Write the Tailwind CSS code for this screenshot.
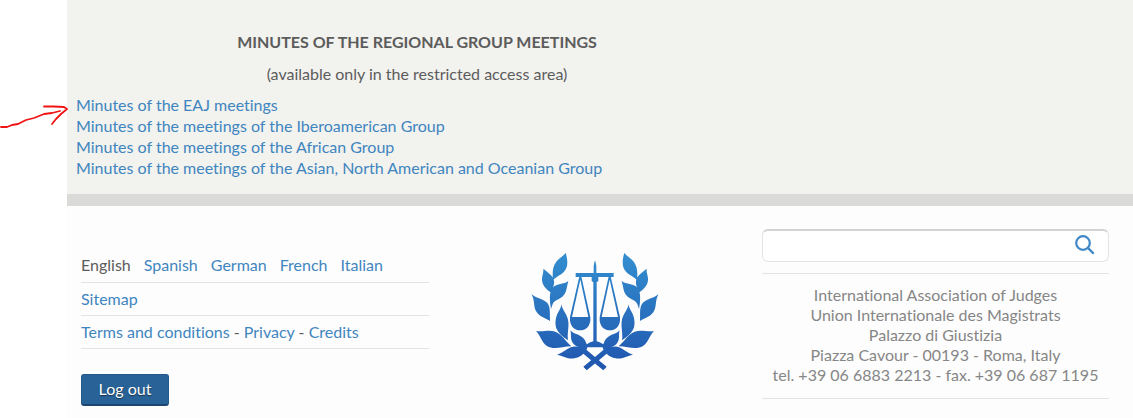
<!DOCTYPE html>
<html lang="en">

<head>
  <meta charset="UTF-8" />
  <meta name="viewport" content="width=device-width, initial-scale=1.0" />
  <title>Minutes of the regional group meetings</title>
  <script src="https://cdn.jsdelivr.net/npm/@tailwindcss/browser@4"></script>
</head>

<body class="relative bg-white pl-[67px] font-['Lato',sans-serif] text-base leading-[21px] text-[#5c5c5c] [font-variant-ligatures:none]">

  <main class="border-b-12 border-[#dadad8] bg-[#f2f2ee] px-[9px] pt-[31px] pb-4">
    <div class="max-w-[682px]">
      <h1 class="text-center font-bold">MINUTES OF THE REGIONAL GROUP MEETINGS</h1>
      <p class="mt-[11px] text-center">(available only in the restricted access area)</p>
      <ul class="mt-[10px] text-[#3f85c0]">
        <li><a href="#" class="hover:underline">Minutes of the EAJ meetings</a></li>
        <li><a href="#" class="hover:underline">Minutes of the meetings of the Iberoamerican Group</a></li>
        <li><a href="#" class="hover:underline">Minutes of the meetings of the African Group</a></li>
        <li><a href="#" class="hover:underline">Minutes of the meetings of the Asian, North American and Oceanian Group</a></li>
      </ul>
    </div>
  </main>

  <!-- pointer to the first link -->
  <svg class="absolute top-[100px] left-0" width="70" height="32" viewBox="0 0 70 32" fill="none" stroke="#f01414" stroke-width="1.8" stroke-linecap="round" stroke-linejoin="round" aria-hidden="true">
    <path d="M1 27 L7 27 L12 25 L18 24 L26 20 L34 18 L44 14 L52 13 L60 11" />
    <path d="M44 6.500 L54 6.500 L64 7 L67 9 L61 14 L56 19 L52 24" />
  </svg>

  <footer class="grid grid-cols-[348px_1fr_347px] bg-[#fdfdfd] pt-[23px] pr-6 pb-4 pl-[14px]">
    <div class="pt-[21px]">
      <nav class="flex gap-[13px] border-b border-[#e3e3e3] pt-1 pb-[7px] text-[#3f85c0]">
        <span class="text-[#5c5c5c]">English</span>
        <a href="#">Spanish</a>
        <a href="#">German</a>
        <a href="#">French</a>
        <a href="#">Italian</a>
      </nav>
      <p class="border-b border-[#e3e3e3] pt-[5px] pb-[6px] text-[#3f85c0]"><a href="#">Sitemap</a></p>
      <p class="border-b border-[#e3e3e3] pt-[5px] pb-[6px]">
        <a href="#" class="text-[#3f85c0]">Terms and conditions</a> -
        <a href="#" class="text-[#3f85c0]">Privacy</a> -
        <a href="#" class="text-[#3f85c0]">Credits</a>
      </p>
      <button type="button" class="mt-[25px] h-8 w-22 rounded-[3px] border border-b-2 border-[#255a8c] border-b-[#1c4670] bg-[#286296] pb-px leading-5 text-white text-shadow-[0_1px_1px_rgba(0,0,0,0.5)]">Log out</button>
    </div>

    <div class="flex items-start justify-center pt-[11px]">
      <svg width="155" height="140" viewBox="0 0 465 420" role="img" aria-label="International Association of Judges">
        <defs>
          <linearGradient id="blue" gradientUnits="userSpaceOnUse" x1="0" y1="38" x2="0" y2="390">
            <stop offset="0" stop-color="#338fd0" />
            <stop offset="1" stop-color="#2055ae" />
          </linearGradient>
          <clipPath id="emblem">
            <!-- left laurel -->
            <path d="M143 38 C151 66 149 82 139 94 C131 105 116 108 105 121 C103 98 103 80 116 64 C124 53 137 49 143 38Z" />
            <path d="M76 86 C91 99 105 106 108 123 C110 138 101 145 101 159 C85 148 74 139 72 121 C71 107 77 101 76 86Z" />
            <path d="M151 123 C145 143 147 158 133 170 C121 180 108 179 103 195 L99 207 C96 193 95 178 96 165 C98 148 105 138 119 134 C132 130 141 131 151 123Z" />
            <path d="M40 161 C52 175 75 174 88 189 C98 201 95 218 96 243 C80 233 62 229 54 213 C46 198 51 181 40 161Z" />
            <path d="M130 193 C133 212 149 223 151 245 C153 265 147 281 150 301 C136 292 119 279 114 262 C110 245 114 228 121 216 C126 207 129 203 130 193Z" />
            <path d="M54 273 C76 276 93 268 112 275 C133 283 142 303 160 319 C133 319 108 331 87 318 C70 307 68 286 54 273Z" />
            <path d="M157 271 C164 281 180 282 192 291 C203 299 205 312 210 322 C194 326 172 321 164 308 C156 296 161 286 157 271Z" />
            <path d="M117 344 C138 338 146 323 165 320 C181 318 193 326 208 323 C202 339 187 352 169 355 C149 358 134 347 117 344Z" />
            <!-- right laurel -->
            <path d="M319 38 C311 66 313 82 323 94 C331 105 346 108 357 121 C359 98 359 80 346 64 C338 53 325 49 319 38Z" />
            <path d="M386 86 C371 99 357 106 354 123 C352 138 361 145 361 159 C377 148 388 139 390 121 C391 107 385 101 386 86Z" />
            <path d="M311 123 C317 143 315 158 329 170 C341 180 354 179 359 195 L363 207 C366 193 367 178 366 165 C364 148 357 138 343 134 C330 130 321 131 311 123Z" />
            <path d="M422 161 C410 175 387 174 374 189 C364 201 367 218 366 243 C382 233 400 229 408 213 C416 198 411 181 422 161Z" />
            <path d="M332 193 C329 212 313 223 311 245 C309 265 315 281 312 301 C326 292 343 279 348 262 C352 245 348 228 341 216 C336 207 333 203 332 193Z" />
            <path d="M408 273 C386 276 369 268 350 275 C329 283 320 303 302 319 C329 319 354 331 375 318 C392 307 394 286 408 273Z" />
            <path d="M305 271 C298 281 282 282 270 291 C259 299 257 312 252 322 C268 326 290 321 298 308 C306 296 301 286 305 271Z" />
            <path d="M345 344 C324 338 316 323 297 320 C281 318 269 326 254 323 C260 339 275 352 293 355 C313 358 328 347 345 344Z" />
            <!-- crossed stems and foot -->
            <path d="M190 318 L205 318 L206 330 L266 380 L256 391 L196 341Z" />
            <path d="M272 318 L257 318 L256 330 L196 380 L206 391 L266 341Z" />
            <path d="M198 322 C203 310 220 307 225 304 L237 304 C242 307 259 310 264 322Z" />
            <!-- post and beam -->
            <path d="M230 63 L232 63 L235 78 L235 99 L287 99 L287 111 L241 111 L241 123 L236 127 L236 308 L226 308 L226 127 L221 123 L221 111 L173 111 L173 99 L227 99 L227 78Z" />
            <!-- pans -->
            <path d="M184 109 L190 109 L217 232 L217 242 C214 262 202 271 187 271 C171 271 159 262 156 242 L156 232Z M187 119 L162 231 L211 231Z" clip-rule="evenodd" />
            <path d="M272 109 L278 109 L306 232 L306 242 C303 262 291 271 276 271 C260 271 248 262 245 242 L245 232Z M275 119 L251 231 L300 231Z" clip-rule="evenodd" />
          </clipPath>
        </defs>
        <rect width="465" height="420" fill="url(#blue)" clip-path="url(#emblem)" />
      </svg>
    </div>

    <div>
      <form class="flex h-[33px] items-center rounded-md border border-t-2 border-[#e3e3e3] border-t-[#d2d2d2] bg-white pr-3" role="search">
        <input type="search" aria-label="Search" class="h-full min-w-0 flex-1 bg-transparent px-3 outline-none" />
        <button type="submit" aria-label="Search">
          <svg width="22" height="22" viewBox="0 0 22 22" fill="none" stroke="#3f87c5">
            <circle cx="9" cy="8" r="6.800" stroke-width="2.200" />
            <path d="M14 13 L19 18" stroke-width="2.400" stroke-linecap="round" />
          </svg>
        </button>
      </form>
      <address class="mt-[11px] border-y border-[#e3e3e3] pt-[11px] pb-[13px] text-center leading-5 text-[#868686] not-italic">
        International Association of Judges<br />
        Union Internationale des Magistrats<br />
        Palazzo di Giustizia<br />
        Piazza Cavour - 00193 - Roma, Italy<br />
        tel. +39 06 6883 2213 - fax. +39 06 687 1195
      </address>
    </div>
  </footer>

</body>

</html>
